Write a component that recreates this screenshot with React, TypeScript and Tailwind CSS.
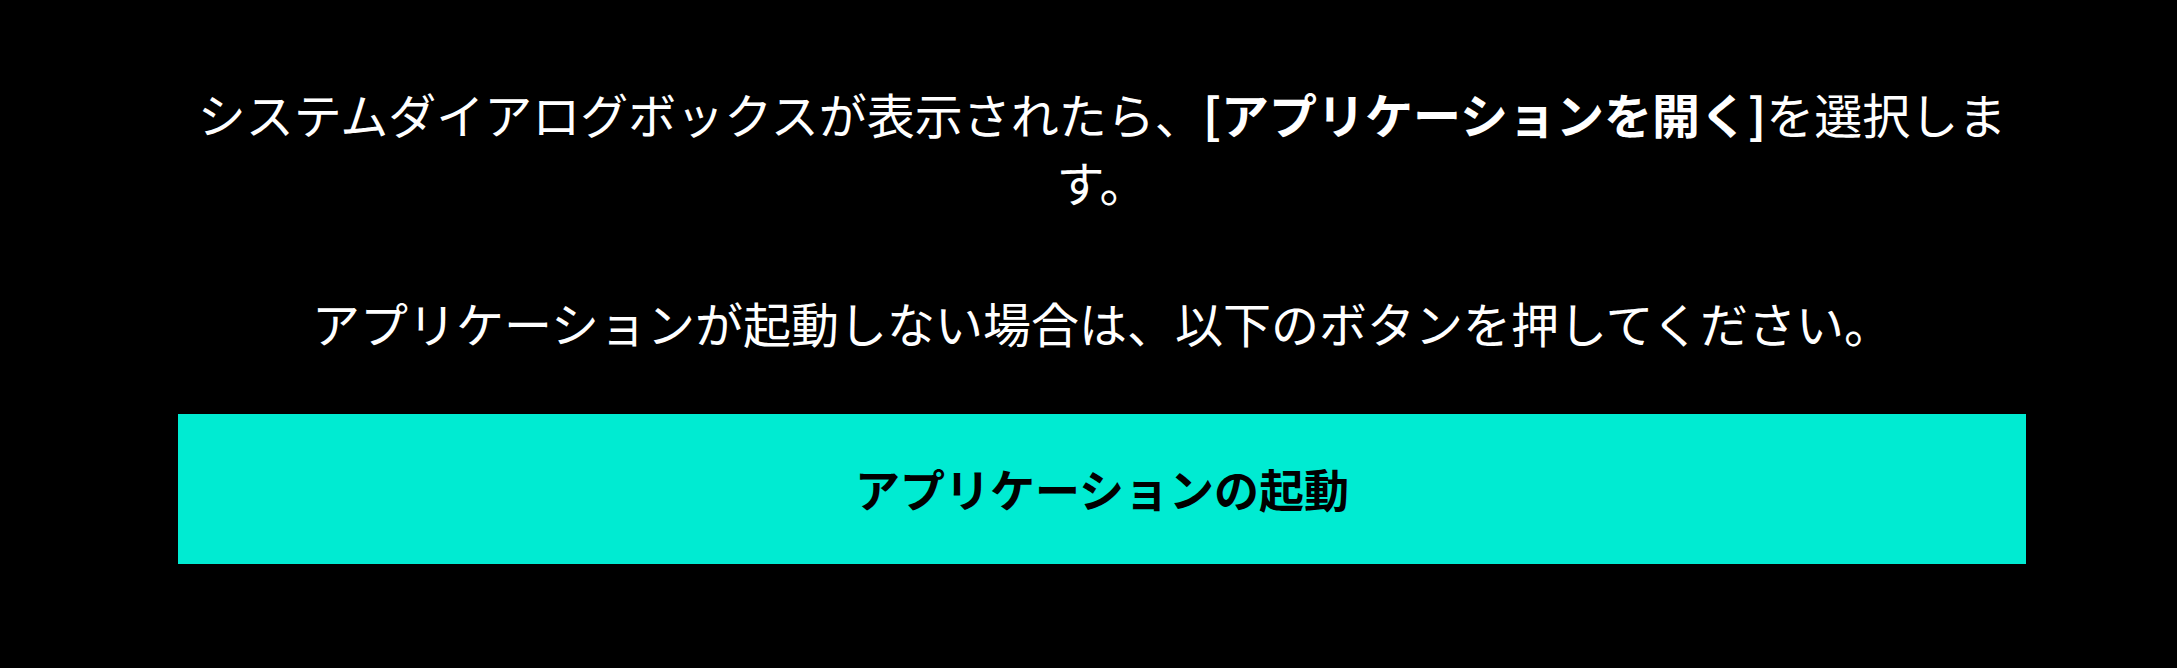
import React from 'react';

const font = '"Noto Sans CJK JP", "Noto Sans", sans-serif';

export default function App() {
    return (
        <div className="min-h-screen bg-black" style={{ fontFamily: font }}>
            <div className="ml-[178px] w-[1848px] pt-[79px] text-center text-white">
                <p className="text-[48px] leading-[68px]">
                    システムダイアログボックスが表示されたら、<b className="font-bold">[アプリケーションを開く]</b>を選択します。
                </p>
                <p className="mt-[73px] text-[48px] leading-[68px]">
                    アプリケーションが起動しない場合は、以下のボタンを押してください。
                </p>
                <button
                    type="button"
                    className="mt-[58px] flex h-[150px] w-full items-center justify-center bg-[#00ebd2] text-[45px] font-bold text-black"
                >
                    アプリケーションの起動
                </button>
            </div>
        </div>
    );
}
